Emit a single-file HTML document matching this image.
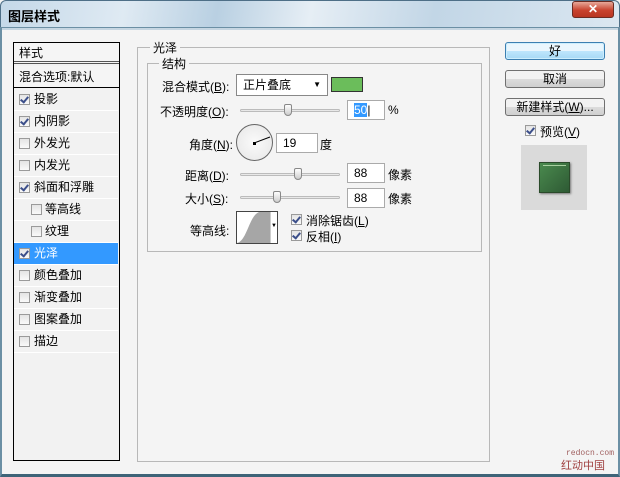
<!DOCTYPE html><html><head><meta charset="utf-8"><style>
*{margin:0;padding:0;box-sizing:border-box}
body{width:620px;height:477px;overflow:hidden;font-family:"Liberation Sans","Noto Sans CJK SC","WenQuanYi Zen Hei",sans-serif;font-size:12px;color:#000;background:#f4f4f4;position:relative}
.a{position:absolute;white-space:nowrap}
.cb{position:absolute;width:11px;height:11px;border:1px solid #9a9a9a;background:linear-gradient(#e4e4e4,#fafafa)}
.cb.on::after{content:"";position:absolute;left:2px;top:0px;width:3px;height:6px;border:solid #3c4f8a;border-width:0 2px 2px 0;transform:rotate(40deg)}
.row{position:absolute;left:14px;width:104px;height:22px;border-bottom:1px solid #fff;line-height:21px;padding-left:20px}
.row .cb{left:5px;top:5px}
.btn{position:absolute;left:505px;width:100px;height:18px;border:1px solid #707070;border-radius:3px;background:linear-gradient(#f2f2f2 50%,#dcdcdc 50%,#cfcfcf);text-align:center;line-height:16px}
.inp{position:absolute;height:20px;border:1px solid #aaa;background:#fff;padding-left:6px;line-height:18px}
.sl{position:absolute;height:3px;border:1px solid #bbb;border-radius:2px;background:#e8e8e8}
.th{position:absolute;width:8px;height:12px;border:1px solid #888;border-radius:2px 2px 4px 4px;background:linear-gradient(#fff,#ccc)}
u{text-decoration:underline}
</style></head><body>
<div class="a" style="left:0;top:0;width:620px;height:28px;background:linear-gradient(100deg,#c4d8e8 0%,#dfeaf3 20%,#b9d0e2 35%,#e6eef5 50%,#c2d6e6 70%,#dbe7f1 100%);border:1px solid #4e6f87;border-bottom:none;border-radius:6px 6px 0 0"></div>
<div class="a" style="left:8px;top:6px;font-size:13px;font-weight:bold">图层样式</div>
<div class="a" style="left:572px;top:1px;width:42px;height:17px;border:1px solid #6b2b22;border-radius:3px;background:linear-gradient(#e8a89a,#c8432e 55%,#b83522);color:#fff;font-weight:bold;text-align:center;line-height:15px">✕</div>
<div class="a" style="left:0;top:27px;width:620px;height:450px;border:2px solid #6b8fa4;border-top:1px solid #6b8fa4;border-bottom:3px solid #3e6478"></div>
<div class="a" style="left:2px;top:28px;width:616px;height:2px;background:#c6d6e2"></div>

<div class="a" style="left:13px;top:42px;width:107px;height:419px;border:1px solid #000;background:#f2f2f2"></div>
<div class="a" style="left:14px;top:43px;width:105px;height:21px;line-height:21px;padding-left:5px;border-bottom:3px double #555;background:#f5f5f5">样式</div>
<div class="a" style="left:14px;top:66px;width:105px;height:22px;line-height:22px;padding-left:5px;border-bottom:1px solid #000;background:#f5f5f5">混合选项:默认</div>
<div class="row" style="top:89px"><span class="cb on"></span>投影</div>
<div class="row" style="top:111px"><span class="cb on"></span>内阴影</div>
<div class="row" style="top:133px"><span class="cb"></span>外发光</div>
<div class="row" style="top:155px"><span class="cb"></span>内发光</div>
<div class="row" style="top:177px"><span class="cb on"></span>斜面和浮雕</div>
<div class="row" style="top:199px;padding-left:31px"><span class="cb" style="left:17px"></span>等高线</div>
<div class="row" style="top:221px;padding-left:31px"><span class="cb" style="left:17px"></span>纹理</div>
<div class="row" style="top:243px;background:#3399ff;color:#fff"><span class="cb on"></span>光泽</div>
<div class="row" style="top:265px"><span class="cb"></span>颜色叠加</div>
<div class="row" style="top:287px"><span class="cb"></span>渐变叠加</div>
<div class="row" style="top:309px"><span class="cb"></span>图案叠加</div>
<div class="row" style="top:331px"><span class="cb"></span>描边</div>

<div class="a" style="left:137px;top:47px;width:353px;height:415px;border:1px solid #b8b8b8"></div>
<div class="a" style="left:150px;top:39px;background:#f4f4f4;padding:0 3px">光泽</div>
<div class="a" style="left:147px;top:63px;width:335px;height:189px;border:1px solid #b8b8b8"></div>
<div class="a" style="left:159px;top:55px;background:#f4f4f4;padding:0 3px">结构</div>

<div class="a" style="left:162px;top:78px">混合模式(<u>B</u>):</div>
<div class="a" style="left:236px;top:74px;width:92px;height:22px;border:1px solid #888;background:#fff;padding-left:6px;line-height:20px">正片叠底<span style="position:absolute;right:6px;top:0;font-size:8px">▼</span></div>
<div class="a" style="left:331px;top:77px;width:32px;height:15px;border:1px solid #333;background:#6bbd5b"></div>

<div class="a" style="left:160px;top:103px">不透明度(<u>O</u>):</div>
<div class="sl" style="left:240px;top:109px;width:100px"></div>
<div class="th" style="left:284px;top:104px"></div>
<div class="inp" style="left:347px;top:100px;width:38px"><span style="background:#3399ff;color:#fff">50</span>|</div>
<div class="a" style="left:388px;top:103px">%</div>

<div class="a" style="left:189px;top:136px">角度(<u>N</u>):</div>
<div class="a" style="left:236px;top:124px;width:37px;height:37px;border:1px solid #666;border-radius:50%;background:radial-gradient(#fafafa,#e6e6e6)"></div>
<svg class="a" style="left:236px;top:124px" width="37" height="37"><line x1="18" y1="19" x2="34" y2="13" stroke="#000" stroke-width="1"/><rect x="17" y="18" width="3" height="3" fill="#000"/></svg>
<div class="inp" style="left:276px;top:133px;width:42px">19</div>
<div class="a" style="left:320px;top:136px">度</div>

<div class="a" style="left:185px;top:167px">距离(<u>D</u>):</div>
<div class="sl" style="left:240px;top:173px;width:100px"></div>
<div class="th" style="left:294px;top:168px"></div>
<div class="inp" style="left:347px;top:163px;width:38px">88</div>
<div class="a" style="left:388px;top:166px">像素</div>

<div class="a" style="left:185px;top:190px">大小(<u>S</u>):</div>
<div class="sl" style="left:240px;top:196px;width:100px"></div>
<div class="th" style="left:273px;top:191px"></div>
<div class="inp" style="left:347px;top:188px;width:38px">88</div>
<div class="a" style="left:388px;top:190px">像素</div>

<div class="a" style="left:190px;top:222px">等高线:</div>
<div class="a" style="left:236px;top:211px;width:42px;height:33px;border:1px solid #444;background:#fff"></div>
<svg class="a" style="left:237px;top:212px" width="33" height="31"><path d="M0 31 C10 29 12 4 22 0 L33 0 L33 31Z" fill="#a6a6a6"/></svg>
<div class="a" style="left:270px;top:212px;width:7px;height:31px;background:#fff;border-left:1px solid #ccc;font-size:6px;line-height:28px;text-align:center">▼</div>
<span class="cb on" style="left:291px;top:214px"></span><div class="a" style="left:306px;top:212px">消除锯齿(<u>L</u>)</div>
<span class="cb on" style="left:291px;top:230px"></span><div class="a" style="left:306px;top:228px">反相(<u>I</u>)</div>

<div class="btn" style="top:42px;border-color:#3c7fb1;background:linear-gradient(#eaf6fd 50%,#bee6fd 50%,#a7d9f5);box-shadow:inset 0 0 0 1px #cdeefd">好</div>
<div class="btn" style="top:70px">取消</div>
<div class="btn" style="top:98px">新建样式(<u>W</u>)...</div>
<span class="cb on" style="left:525px;top:125px"></span><div class="a" style="left:540px;top:123px">预览(<u>V</u>)</div>
<div class="a" style="left:521px;top:145px;width:66px;height:65px;background:#dadada"></div>
<div class="a" style="left:539px;top:162px;width:31px;height:31px;background:linear-gradient(135deg,#4a8a4e,#2e5a34);border:1px solid #2a4a2a;box-shadow:1px 1px 2px #777"><div style="height:1px;margin:2px 3px 0;background:#a8d0a0"></div></div>

<div class="a" style="left:566px;top:449px;font-family:'Liberation Mono',monospace;font-size:8px;color:#a06060">redocn.com</div>
<div class="a" style="left:561px;top:457px;font-size:11px;color:#a04040">红动中国</div>
</body></html>
